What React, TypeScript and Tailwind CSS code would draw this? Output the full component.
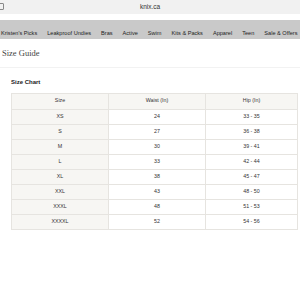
import React from 'react';

const navItems = [
  "Kristen's Picks",
  'Leakproof Undies',
  'Bras',
  'Active',
  'Swim',
  'Kits & Packs',
  'Apparel',
  'Teen',
  'Sale & Offers',
];

const rows = [
  ['XS', '24', '33 - 35'],
  ['S', '27', '36 - 38'],
  ['M', '30', '39 - 41'],
  ['L', '33', '42 - 44'],
  ['XL', '38', '45 - 47'],
  ['XXL', '43', '48 - 50'],
  ['XXXL', '48', '51 - 53'],
  ['XXXXL', '52', '54 - 56'],
];

export default function App() {
  return (
    <div className="w-[300px] h-[300px] overflow-hidden bg-white font-['Liberation_Sans',Arial,sans-serif] text-[#222]">
      {/* browser bar */}
      <div className="relative h-[14px] bg-[#f1f1f1] flex items-center justify-center">
        <div className="absolute left-[-3px] top-[3px] w-[7px] h-[7px] border border-[#888] rounded-[1px]" />
        <span className="text-[6.5px] text-[#333]">knix.ca</span>
      </div>
      <div className="h-[6px] bg-white" />

      {/* nav */}
      <div className="h-[19px] bg-[#c9c9c9] flex items-end pb-[2px] pl-[1px] gap-[10px] whitespace-nowrap text-[5.6px] text-[#222]">
        {navItems.map((n) => (
          <span key={n}>{n}</span>
        ))}
      </div>

      <div className="px-[2px] pt-[8px] pb-[7px] border-b border-[#f2f2f2]">
        <h1 className="font-['Liberation_Serif',serif] text-[8.5px] text-[#444]">Size Guide</h1>
      </div>

      <div className="pl-[11px] pt-[10px]">
        <h2 className="text-[6px] font-bold text-[#222] mb-[6px]">Size Chart</h2>
        <table className="w-[287px] border-collapse text-[5.3px] text-[#333] table-fixed">
          <thead>
            <tr className="h-[16px] bg-[#f7f6f3]">
              <th className="w-[97px] font-normal border border-[#e6e4e0]">Size</th>
              <th className="w-[97px] font-normal border border-[#e6e4e0]">Waist (In)</th>
              <th className="font-normal border border-[#e6e4e0]">Hip (In)</th>
            </tr>
          </thead>
          <tbody>
            {rows.map((r) => (
              <tr key={r[0]} className="h-[15px]">
                <td className="text-center bg-[#f7f6f3] border border-[#e6e4e0]">{r[0]}</td>
                <td className="text-center border border-[#e6e4e0]">{r[1]}</td>
                <td className="text-center border border-[#e6e4e0]">{r[2]}</td>
              </tr>
            ))}
          </tbody>
        </table>
      </div>
    </div>
  );
}
